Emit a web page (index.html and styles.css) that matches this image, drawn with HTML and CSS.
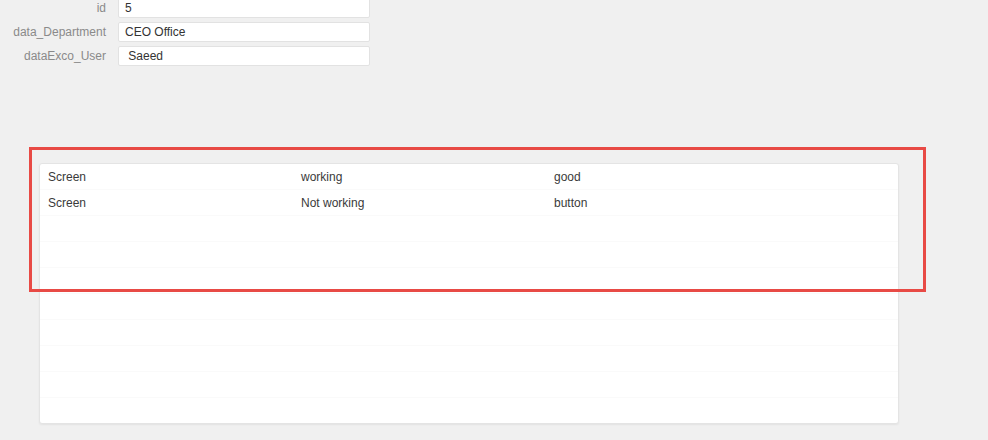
FILE: index.html
```html
<!DOCTYPE html>
<html>
<head>
<meta charset="utf-8">
<link rel="stylesheet" href="styles.css">
</head>
<body>
<div class="form">
  <label class="lbl">id</label><div class="inp">5</div>
  <label class="lbl">data_Department</label><div class="inp">CEO Office</div>
  <label class="lbl">dataExco_User</label><div class="inp">&nbsp;Saeed</div>
</div>
<div class="card">
  <div class="row"><span>Screen</span><span>working</span><span>good</span></div>
  <div class="row"><span>Screen</span><span>Not working</span><span>button</span></div>
  <div class="row"></div>
  <div class="row"></div>
  <div class="row"></div>
  <div class="row"></div>
  <div class="row"></div>
  <div class="row"></div>
  <div class="row"></div>
  <div class="row"></div>
</div>
<div class="highlight"></div>
</body>
</html>
```
FILE: styles.css
```css
html, body {
  margin: 0;
  padding: 0;
  background: #f0f0f0;
  font-family: "Liberation Sans", Arial, sans-serif;
  font-size: 12px;
}
body {
  position: relative;
  width: 988px;
  height: 440px;
  overflow: hidden;
}
.form {
  display: grid;
  grid-template-columns: 106px 252px;
  column-gap: 12px;
  row-gap: 4px;
  margin-top: -2px;
}
.lbl {
  text-align: right;
  color: #8a8a8a;
  line-height: 20px;
  height: 20px;
}
.inp {
  box-sizing: border-box;
  height: 20px;
  line-height: 18px;
  background: #fff;
  border: 1px solid #e2e2e2;
  border-radius: 2px;
  padding-left: 6px;
  color: #333;
}
.card {
  box-sizing: border-box;
  margin: 97px 0 0 39px;
  width: 860px;
  height: 261px;
  background: #fff;
  border: 1px solid #e4e4e4;
  border-radius: 3px;
  box-shadow: 0 1px 2px rgba(0,0,0,0.06);
  overflow: hidden;
}
.row {
  box-sizing: border-box;
  height: 26px;
  border-bottom: 1px solid #fafafa;
  display: grid;
  grid-template-columns: 253px 253px 1fr;
  padding-left: 8px;
  align-items: center;
  color: #3a3a3a;
}
.highlight {
  position: absolute;
  box-sizing: border-box;
  left: 29px;
  top: 147px;
  width: 897px;
  height: 145px;
  border: 3px solid #e84a45;
}
```
